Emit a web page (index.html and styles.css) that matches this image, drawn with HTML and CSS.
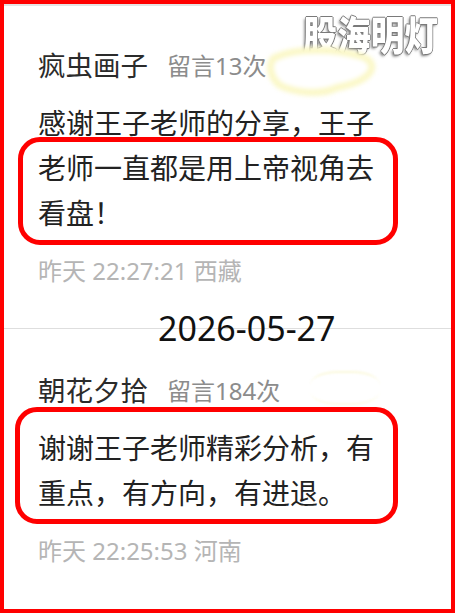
FILE: index.html
```html
<!DOCTYPE html>
<html lang="zh-CN">
<head>
    <meta charset="UTF-8">
    <meta name="viewport" content="width=device-width, initial-scale=1.0">
    <title>留言</title>
    <link rel="stylesheet" href="styles.css">
</head>
<body>
    <div class="frame">
        <div class="watermark">股海明灯</div>

        <section class="comment">
            <div class="author">
                <span class="name">疯虫画子</span>
                <span class="count">留言13次</span>
                <svg class="smear" width="120" height="56" viewBox="0 0 120 56">
                    <path d="M10 14 C30 4 70 4 96 12 C110 16 112 26 100 34 C92 40 80 42 72 44 C60 50 40 50 22 44 C8 40 2 22 10 14 Z" />
                </svg>
            </div>
            <div class="content">
                <span class="mark mark-first"></span>
                感谢王子老师的分享，王子老师一直都是用上帝视角去看盘！
            </div>
            <div class="meta">昨天 22:27:21 西藏</div>
        </section>

        <div class="date-sep"><span>2026-05-27</span></div>

        <section class="comment">
            <div class="author">
                <span class="name">朝花夕拾</span>
                <span class="count">留言184次</span>
                <span class="smear-faint"></span>
            </div>
            <div class="content">
                <span class="mark mark-second"></span>
                谢谢王子老师精彩分析，有重点，有方向，有进退。
            </div>
            <div class="meta">昨天 22:25:53 河南</div>
        </section>
    </div>
</body>
</html>
```

FILE: styles.css
```css
body {
    margin: 0;
    font-family: "Noto Sans CJK SC", "Noto Sans", sans-serif;
    background: #fff;
}
.frame {
    position: relative;
    width: 455px;
    height: 613px;
    box-sizing: border-box;
    border: 4px solid #ff0000;
    overflow: hidden;
}
.frame::before {
    content: "";
    display: block;
    height: 2px;
    background: #e4e4e4;
}
.watermark {
    position: absolute;
    top: 4px;
    right: 13px;
    font-size: 40px;
    font-weight: 900;
    line-height: 50px;
    color: #fff;
    transform: scaleX(0.84);
    transform-origin: right center;
    text-shadow:
        1px 0 0 #7a7a7a, -1px 0 0 #7a7a7a, 0 1px 0 #7a7a7a, 0 -1px 0 #7a7a7a,
        -2px 2px 3px rgba(0, 0, 0, 0.5);
}
.comment {
    padding-left: 34px;
}
.author {
    position: relative;
    display: flex;
    align-items: center;
    height: 44px;
    margin-top: 36px;
}
.name {
    font-size: 27.5px;
    color: #2b2b2b;
}
.count {
    margin-left: 19px;
    font-family: "Noto Sans", "Noto Sans CJK SC", sans-serif;
    font-size: 24px;
    color: #8c8c8c;
}
.smear {
    position: absolute;
    left: 226px;
    top: 2px;
}
.smear path {
    fill: #fff;
    stroke: #fbf8c8;
    stroke-width: 7;
    filter: blur(2px);
}
.smear-faint {
    position: absolute;
    left: 272px;
    top: 4px;
    width: 70px;
    height: 30px;
    border-top: 2px solid #fbf9dc;
    border-bottom: 2px solid #fdfbe6;
    border-radius: 40%;
    filter: blur(1px);
}
.content {
    position: relative;
    width: 340px;
    margin-top: 14px;
    font-size: 28px;
    line-height: 45px;
    color: #222;
}
.mark {
    position: absolute;
    box-sizing: border-box;
    border: 5px solid #ff0000;
    border-radius: 22px;
}
.mark-first {
    top: 37px;
    left: -20px;
    width: 380px;
    height: 108px;
}
.mark-second {
    top: -18px;
    left: -23px;
    width: 383px;
    height: 117px;
}
.meta {
    margin-top: 16px;
    font-family: "Noto Sans", "Noto Sans CJK SC", sans-serif;
    font-size: 24px;
    line-height: 40px;
    color: #b5b5b5;
}
.date-sep {
    margin-top: 15px;
    padding-left: 154px;
    font-family: "Noto Sans", "Noto Sans CJK SC", sans-serif;
    font-size: 34px;
    line-height: 44px;
    color: #111;
    background: linear-gradient(#dedede, #dedede) center / 100% 1px no-repeat;
}
.date-sep + .comment .author {
    margin-top: 17px;
}
```
